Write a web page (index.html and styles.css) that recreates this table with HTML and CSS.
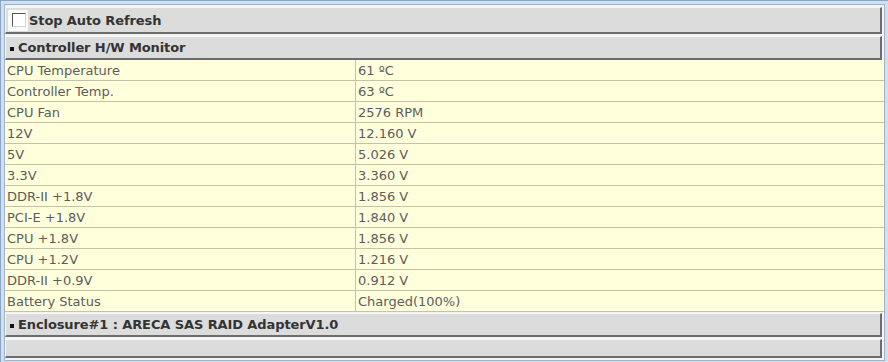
FILE: index.html
```html
<!DOCTYPE html>
<html>
<head>
<meta charset="utf-8">
<link rel="stylesheet" href="styles.css">
</head>
<body>
<div class="frame">
  <div class="inner">
    <div class="bar refresh">
      <span class="cbwrap"><span class="cb"></span></span>
      <span class="label">Stop Auto Refresh</span>
    </div>
    <div class="bar head"><span class="dot"></span>Controller H/W Monitor</div>
    <table class="data">
      <tr><td class="k">CPU Temperature</td><td>61 ºC</td></tr>
      <tr><td class="k">Controller Temp.</td><td>63 ºC</td></tr>
      <tr><td class="k">CPU Fan</td><td>2576 RPM</td></tr>
      <tr><td class="k">12V</td><td>12.160 V</td></tr>
      <tr><td class="k">5V</td><td>5.026 V</td></tr>
      <tr><td class="k">3.3V</td><td>3.360 V</td></tr>
      <tr><td class="k">DDR-II +1.8V</td><td>1.856 V</td></tr>
      <tr><td class="k">PCI-E +1.8V</td><td>1.840 V</td></tr>
      <tr><td class="k">CPU +1.8V</td><td>1.856 V</td></tr>
      <tr><td class="k">CPU +1.2V</td><td>1.216 V</td></tr>
      <tr><td class="k">DDR-II +0.9V</td><td>0.912 V</td></tr>
      <tr><td class="k">Battery Status</td><td>Charged(100%)</td></tr>
    </table>
    <div class="bar head"><span class="dot"></span>Enclosure#1 : ARECA SAS RAID AdapterV1.0</div>
    <div class="bar empty"></div>
  </div>
</div>
</body>
</html>
```
FILE: styles.css
```css
html, body {
  margin: 0;
  padding: 0;
  background: #c4d6e8;
}
body {
  width: 888px;
  height: 362px;
  overflow: hidden;
  font-family: "DejaVu Sans", Verdana, sans-serif;
  font-size: 13px;
}
.frame {
  box-sizing: border-box;
  width: 888px;
  height: 362px;
  border-top: 1px solid #8aa6c4;
  border-left: 1px solid #8aa6c4;
  padding: 3px 3px 3px 3px;
  background: #d2e0ee;
}
.inner {
  box-sizing: border-box;
  height: 357px;
  border: 1px solid #9eb4ca;
  background: #f2f4f6;
  padding: 2px 0 1px 0;
  display: flex;
  flex-direction: column;
  gap: 2px;
}
.bar {
  box-sizing: border-box;
  background: #dcdcdc;
  border-style: solid;
  border-width: 1px 2px 2px 1px;
  border-color: #f8f8f8 #6c6c6c #6c6c6c #f8f8f8;
  margin-right: 2px;
  display: flex;
  align-items: center;
  font-weight: bold;
  color: #333333;
}
.refresh {
  height: 27px;
  padding-left: 2px;
}
.cbwrap {
  width: 20px;
  height: 21px;
  background: #fafafa;
  display: flex;
  align-items: center;
  justify-content: center;
  margin-right: 1px;
}
.cb {
  box-sizing: border-box;
  width: 14px;
  height: 14px;
  border: 1px solid;
  border-color: #555555 #d4d4d4 #d4d4d4 #555555;
  background: #ffffff;
  margin-left: 1px;
}
.head {
  height: 24px;
  padding-left: 4px;
}
.head, .refresh {
  letter-spacing: -0.1px;
}
.dot {
  width: 4px;
  height: 4px;
  background: #111111;
  margin-right: 4px;
  margin-top: 3px;
}
.empty {
  height: 19px;
}
.data {
  border-collapse: collapse;
  width: 100%;
  background: #ffffdc;
  color: #5c5c5c;
  margin: -2px 0 -1px 0;
}
.data td {
  padding: 2px 0 0 2px;
  border-bottom: 1px solid #c4c2a8;
  line-height: 18px;
  white-space: nowrap;
}
.data td.k {
  width: 348px;
  border-right: 1px solid #c4c2a8;
}
```
